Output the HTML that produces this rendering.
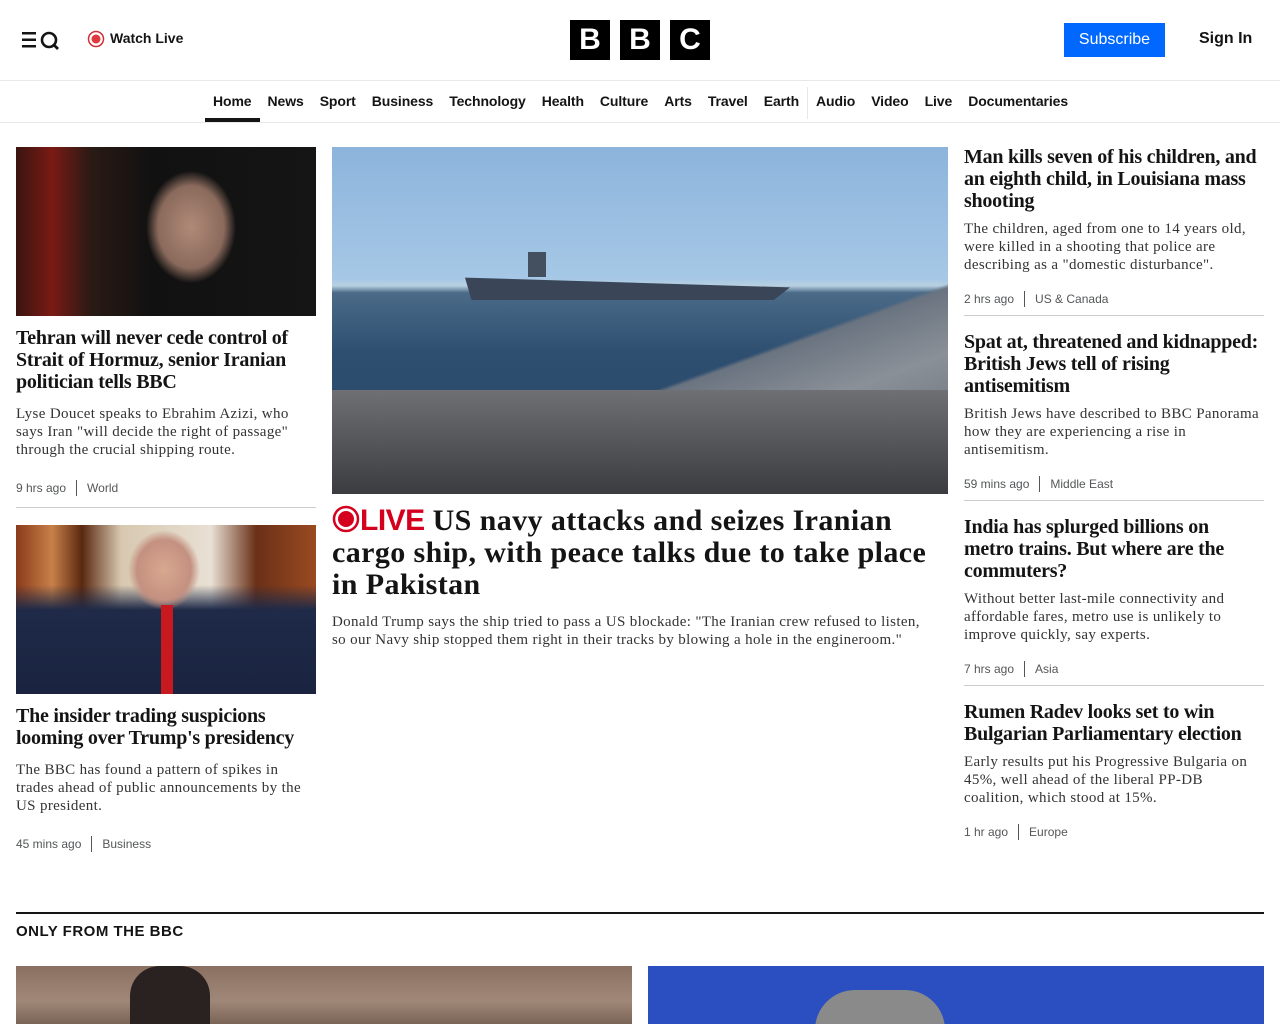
<!DOCTYPE html>
<html><head><meta charset="utf-8"><style>
*{margin:0;padding:0;box-sizing:border-box}
body{width:1280px;height:1024px;overflow:hidden;background:#fff;font-family:"Liberation Sans",sans-serif;color:#141414;position:relative}
.abs{position:absolute}
h3{font-family:"Liberation Serif",serif;font-weight:bold;font-size:20px;line-height:22px;color:#141414;letter-spacing:-0.25px}
p.d{font-family:"Liberation Serif",serif;font-size:15px;line-height:18px;color:#333;letter-spacing:0.35px}
.meta{font-size:12px;color:#545658;display:flex;align-items:center}
.meta span.sep{display:inline-block;width:1px;height:16px;background:#545658;margin:0 10px}
nav a{font-size:14px;font-weight:bold;color:#141414;text-decoration:none;margin:0 8px}
</style></head><body>
<svg class="abs" style="left:22px;top:30px" width="40" height="22" viewBox="0 0 40 22"><rect x="0" y="2" width="14" height="2.5" fill="#141414"/><rect x="0" y="8.5" width="14" height="2.5" fill="#141414"/><rect x="0" y="15" width="14" height="2.5" fill="#141414"/><circle cx="27" cy="10" r="7" fill="none" stroke="#141414" stroke-width="2.6"/><path d="M31 14l5 5" stroke="#141414" stroke-width="2.8"/></svg>
<svg class="abs" style="left:87px;top:30px" width="18" height="18"><circle cx="9" cy="9" r="7.5" fill="none" stroke="#d0303a" stroke-width="1.5"/><circle cx="9" cy="9" r="4.5" fill="#e0393e"/></svg>
<div class="abs" style="left:110px;top:30px;font-size:14px;font-weight:bold">Watch Live</div>
<div class="abs" style="left:570px;top:20px;display:flex;gap:10px">
<div style="width:40px;height:40px;background:#000;color:#fff;font-weight:bold;font-size:30px;text-align:center;line-height:40px">B</div>
<div style="width:40px;height:40px;background:#000;color:#fff;font-weight:bold;font-size:30px;text-align:center;line-height:40px">B</div>
<div style="width:40px;height:40px;background:#000;color:#fff;font-weight:bold;font-size:30px;text-align:center;line-height:40px">C</div></div>
<div class="abs" style="left:1064px;top:23px;width:101px;height:34px;background:#0068ff;color:#fff;font-size:16px;text-align:center;line-height:33px">Subscribe</div>
<div class="abs" style="left:1199px;top:30px;font-size:16px;font-weight:bold">Sign In</div>
<div class="abs" style="left:0;top:80px;width:1280px;height:1px;background:#e6e8ea"></div>
<nav class="abs" style="left:205px;top:93px;display:flex;white-space:nowrap;letter-spacing:-0.1px">
<a>Home</a><a>News</a><a>Sport</a><a>Business</a><a>Technology</a><a>Health</a><a>Culture</a><a>Arts</a><a>Travel</a><a>Earth</a><span style="width:1px;height:32px;background:#e6e8ea;margin-top:-6px"></span><a>Audio</a><a>Video</a><a>Live</a><a>Documentaries</a></nav>
<div class="abs" style="left:205px;top:118px;width:55px;height:4px;background:#141414"></div>
<div class="abs" style="left:0;top:122px;width:1280px;height:1px;background:#e6e8ea"></div>

<div class="abs" style="left:16px;top:147px;width:300px;height:169px;background:radial-gradient(ellipse 60px 75px at 175px 80px,#b08a78 0%,#8a6a5c 55%,transparent 75%),linear-gradient(90deg,#3a1410 0%,#7a1a14 12%,#2a1a14 25%,#111 45%,#151515 100%)"></div>
<h3 class="abs" style="left:16px;top:327px;width:300px">Tehran will never cede control of Strait of Hormuz, senior Iranian politician tells BBC</h3>
<p class="d abs" style="left:16px;top:405px;width:300px">Lyse Doucet speaks to Ebrahim Azizi, who says Iran "will decide the right of passage" through the crucial shipping route.</p>
<div class="meta abs" style="left:16px;top:480px">9 hrs ago<span class="sep"></span>World</div>
<div class="abs" style="left:16px;top:507px;width:300px;height:1px;background:#ccc"></div>
<div class="abs" style="left:16px;top:525px;width:300px;height:169px;background:radial-gradient(ellipse 45px 50px at 148px 45px,#d8a890 0%,#c49080 60%,transparent 80%),linear-gradient(180deg,transparent 60px,#1e2a48 85px,#1a2440 100%),linear-gradient(90deg,#8a3a1a 0%,#c88048 12%,#5a2810 22%,#d8c8b0 35%,#e8e0d4 65%,#6a3018 80%,#9a4a20 100%)"></div>
<div class="abs" style="left:161px;top:605px;width:12px;height:89px;background:#c81820"></div>
<h3 class="abs" style="left:16px;top:705px;width:300px">The insider trading suspicions looming over Trump's presidency</h3>
<p class="d abs" style="left:16px;top:761px;width:300px">The BBC has found a pattern of spikes in trades ahead of public announcements by the US president.</p>
<div class="meta abs" style="left:16px;top:836px">45 mins ago<span class="sep"></span>Business</div>

<div class="abs" style="left:332px;top:147px;width:616px;height:347px;background:linear-gradient(180deg,#8cb4dc 0%,#a6c8e6 38%,#b8d0e0 40%,#4a6a88 42%,#2e4e70 60%,#284868 100%)"></div>
<div class="abs" style="left:465px;top:272px;width:325px;height:28px;background:#3a4658;clip-path:polygon(0 20%,100% 55%,95% 100%,2% 100%)"></div>
<div class="abs" style="left:528px;top:252px;width:18px;height:25px;background:#445060"></div>
<div class="abs" style="left:332px;top:250px;width:616px;height:244px;background:linear-gradient(160deg,transparent 55%,#6a7480 56%,#8a9098 70%,#5a6068 100%)"></div>
<div class="abs" style="left:332px;top:390px;width:616px;height:104px;background:linear-gradient(180deg,#6e7074,#3a3c40)"></div>
<div class="abs" style="left:332px;top:505px;width:616px;font-family:'Liberation Serif',serif;font-weight:bold;font-size:30px;line-height:32px;color:#141414;letter-spacing:0.4px"><svg width="28" height="28" viewBox="0 0 28 28" style="vertical-align:-3px"><circle cx="14" cy="14" r="12" fill="none" stroke="#d4001e" stroke-width="2.5"/><circle cx="14" cy="14" r="8" fill="#d4001e"/></svg><span style="font-family:'Liberation Sans',sans-serif;color:#d4001e;letter-spacing:-0.5px">LIVE</span> US navy attacks and seizes Iranian cargo ship, with peace talks due to take place in Pakistan</div>
<p class="d abs" style="left:332px;top:613px;width:590px">Donald Trump says the ship tried to pass a US blockade: "The Iranian crew refused to listen, so our Navy ship stopped them right in their tracks by blowing a hole in the engineroom."</p>

<h3 class="abs" style="left:964px;top:146px;width:300px">Man kills seven of his children, and an eighth child, in Louisiana mass shooting</h3>
<p class="d abs" style="left:964px;top:220px;width:300px">The children, aged from one to 14 years old, were killed in a shooting that police are describing as a "domestic disturbance".</p>
<div class="meta abs" style="left:964px;top:291px">2 hrs ago<span class="sep"></span>US &amp; Canada</div>
<div class="abs" style="left:964px;top:315px;width:300px;height:1px;background:#ccc"></div>
<h3 class="abs" style="left:964px;top:331px;width:300px">Spat at, threatened and kidnapped: British Jews tell of rising antisemitism</h3>
<p class="d abs" style="left:964px;top:405px;width:300px">British Jews have described to BBC Panorama how they are experiencing a rise in antisemitism.</p>
<div class="meta abs" style="left:964px;top:476px">59 mins ago<span class="sep"></span>Middle East</div>
<div class="abs" style="left:964px;top:500px;width:300px;height:1px;background:#ccc"></div>
<h3 class="abs" style="left:964px;top:516px;width:300px">India has splurged billions on<br>metro trains. But where are the commuters?</h3>
<p class="d abs" style="left:964px;top:590px;width:300px">Without better last-mile connectivity and affordable fares, metro use is unlikely to improve quickly, say experts.</p>
<div class="meta abs" style="left:964px;top:661px">7 hrs ago<span class="sep"></span>Asia</div>
<div class="abs" style="left:964px;top:685px;width:300px;height:1px;background:#ccc"></div>
<h3 class="abs" style="left:964px;top:701px;width:300px">Rumen Radev looks set to win Bulgarian Parliamentary election</h3>
<p class="d abs" style="left:964px;top:753px;width:300px">Early results put his Progressive Bulgaria on 45%, well ahead of the liberal PP-DB coalition, which stood at 15%.</p>
<div class="meta abs" style="left:964px;top:824px">1 hr ago<span class="sep"></span>Europe</div>

<div class="abs" style="left:16px;top:912px;width:1248px;height:2px;background:#141414"></div>
<div class="abs" style="left:16px;top:923px;font-size:15px;font-weight:bold;letter-spacing:0.5px">ONLY FROM THE BBC</div>
<div class="abs" style="left:16px;top:966px;width:616px;height:58px;background:linear-gradient(180deg,#8a7060,#a08878 60%,#7a6456)"></div>
<div class="abs" style="left:130px;top:966px;width:80px;height:58px;background:#2a2220;border-radius:30px 30px 0 0"></div>
<div class="abs" style="left:648px;top:966px;width:616px;height:58px;background:#2b4fc0;overflow:hidden"><div style="position:absolute;left:167px;top:24px;width:130px;height:40px;background:#8a8a8a;border-radius:60px 60px 0 0"></div></div>
</body></html>
